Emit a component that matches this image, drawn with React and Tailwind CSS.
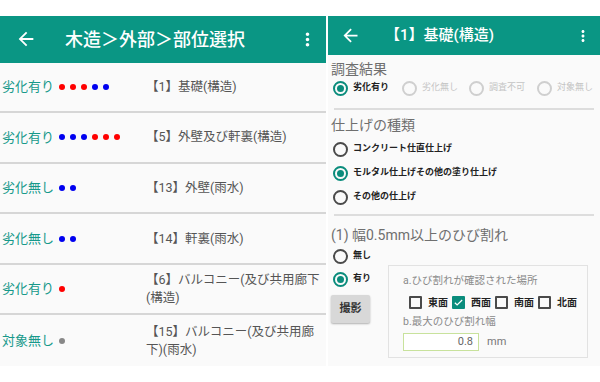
import React from "react";

const TEAL = "bg-[#0a9684]";

function ArrowBack({ size }) {
  return (
    <svg width={size} height={size} viewBox="0 0 24 24" fill="white" aria-hidden="true">
      <path d="M20 11H7.83l5.59-5.59L12 4l-8 8 8 8 1.41-1.41L7.83 13H20v-2z" />
    </svg>
  );
}

function MoreVert({ size }) {
  return (
    <svg width={size} height={size} viewBox="0 0 24 24" fill="white" aria-hidden="true">
      <path d="M12 8c1.1 0 2-.9 2-2s-.9-2-2-2-2 .9-2 2 .9 2 2 2zm0 2c-1.1 0-2 .9-2 2s.9 2 2 2 2-.9 2-2-.9-2-2-2zm0 6c-1.1 0-2 .9-2 2s.9 2 2 2 2-.9 2-2-.9-2-2-2z" />
    </svg>
  );
}

const DOT = {
  r: "bg-[#ff0000]",
  b: "bg-[#0000f0]",
  g: "bg-[#888888]",
};

const PARTS = [
  { status: "劣化有り", dots: "rrrbb", title: "【1】基礎(構造)" },
  { status: "劣化有り", dots: "bbbrrr", title: "【5】外壁及び軒裏(構造)" },
  { status: "劣化無し", dots: "bb", title: "【13】外壁(雨水)" },
  { status: "劣化無し", dots: "bb", title: "【14】軒裏(雨水)" },
  { status: "劣化有り", dots: "r", title: "【6】バルコニー(及び共用廊下(構造)" },
  { status: "対象無し", dots: "g", title: "【15】バルコニー(及び共用廊下)(雨水)" },
];

function PartRow({ part, last }) {
  return (
    <div
      className={`flex items-center h-[51px] ${last ? "" : "border-b-2 border-[#d6d6d6]"}`}
    >
      <div className="w-[146px] shrink-0 flex items-center pl-[2px]">
        <span className="text-[13px] text-[#17998a] w-[52px]">{part.status}</span>
        <span className="ml-[5px] flex gap-[5px]">
          {part.dots.split("").map((d, i) => (
            <span key={i} className={`block w-[6px] h-[6px] rounded-full ${DOT[d]}`} />
          ))}
        </span>
      </div>
      <div className="w-[180px] text-[12.5px] leading-[18px] text-[#555555]">{part.title}</div>
    </div>
  );
}

function Radio({ checked, disabled }) {
  const border = checked
    ? "border-[#0a8c7c]"
    : disabled
    ? "border-[#cfcfcf]"
    : "border-[#4a4a4a]";
  return (
    <span
      className={`flex items-center justify-center w-[15px] h-[15px] rounded-full border-2 shrink-0 ${border}`}
    >
      {checked && <span className="block w-[7px] h-[7px] rounded-full bg-[#0a8c7c]" />}
    </span>
  );
}

function RadioItem({ label, checked, disabled, className = "" }) {
  return (
    <div className={`flex items-center gap-[5px] ${className}`}>
      <Radio checked={checked} disabled={disabled} />
      <span
        className={`text-[9px] font-bold ${disabled ? "text-[#c4c4c4] font-normal" : "text-[#222222]"}`}
      >
        {label}
      </span>
    </div>
  );
}

function Check({ label, checked }) {
  return (
    <div className="w-[43px] flex items-center gap-[6px] shrink-0">
      {checked ? (
        <span className="flex items-center justify-center w-[13px] h-[13px] bg-[#0a8c7c] rounded-[1px]">
          <svg width="11" height="11" viewBox="0 0 24 24" fill="none" aria-hidden="true">
            <path d="M4 12.5l5 5L20 6.5" stroke="white" strokeWidth="2.6" />
          </svg>
        </span>
      ) : (
        <span className="block w-[13px] h-[13px] border-2 border-[#4a4a4a] rounded-[1px]" />
      )}
      <span className="text-[10px] font-bold text-[#222222]">{label}</span>
    </div>
  );
}

export default function App() {
  return (
    <div className="w-[600px] h-[382px] bg-white pt-[16px] flex font-['Roboto','Noto_Sans_CJK_JP',sans-serif] overflow-hidden">
      {/* left: part list */}
      <div className="w-[326px] h-[350px] bg-[#fafafa] flex flex-col shrink-0">
        <div className={`h-[47px] ${TEAL} flex items-center pl-[15px] pr-[8px]`}>
          <ArrowBack size={22} />
          <span className="ml-[28px] text-[18px] font-medium text-white">木造＞外部＞部位選択</span>
          <span className="ml-auto">
            <MoreVert size={21} />
          </span>
        </div>
        {PARTS.map((p, i) => (
          <PartRow key={i} part={p} last={i === PARTS.length - 1} />
        ))}
      </div>

      {/* right: detail */}
      <div className="ml-[2px] w-[272px] h-[350px] bg-[#fafafa] flex flex-col shrink-0">
        <div className={`h-[39px] ${TEAL} flex items-center pl-[12px] pr-[8px]`}>
          <ArrowBack size={21} />
          <span className="ml-[24px] text-[15px] font-medium text-white">【1】基礎(構造)</span>
          <span className="ml-auto">
            <MoreVert size={18} />
          </span>
        </div>

        <div className="pl-[3px] flex flex-col">
          <div className="mt-[4px] text-[14px] leading-[20px] text-[#6f6f6f]">調査結果</div>
          <div className="h-[18px] flex items-center pl-[2px]">
            <RadioItem label="劣化有り" checked className="w-[69px]" />
            <RadioItem label="劣化無し" disabled className="w-[67px]" />
            <RadioItem label="調査不可" disabled className="w-[68px]" />
            <RadioItem label="対象無し" disabled />
          </div>
          <div className="mt-[11px] ml-[3px] w-[260px] h-[2px] bg-[#dddddd]" />

          <div className="mt-[5px] text-[14px] leading-[20px] text-[#6f6f6f]">仕上げの種類</div>
          <div className="mt-[2px] pl-[2px] flex flex-col">
            <RadioItem label="コンクリート仕直仕上げ" className="h-[24px]" />
            <RadioItem label="モルタル仕上げその他の塗り仕上げ" checked className="h-[24px]" />
            <RadioItem label="その他の仕上げ" className="h-[24px]" />
          </div>
          <div className="mt-[5px] ml-[3px] w-[260px] h-[2px] bg-[#dddddd]" />

          <div className="mt-[9px] text-[14px] leading-[20px] text-[#6f6f6f]">(1) 幅0.5mm以上のひび割れ</div>

          <div className="flex">
            <div className="w-[57px] shrink-0 flex flex-col">
              <RadioItem label="無し" className="h-[22px] pl-[2px]" />
              <RadioItem label="有り" checked className="h-[24px] pl-[2px]" />
              <button
                type="button"
                className="mt-[4px] w-[39px] h-[28px] bg-[#d8d8d8] rounded-[2px] shadow-[0_1px_2px_rgba(0,0,0,0.3)] text-[11px] font-bold text-[#333333]"
              >
                撮影
              </button>
            </div>

            <div className="mt-[20px] w-[200px] h-[93px] border border-[#e2e2e2] bg-[#fafafa] pl-[14px] pt-[8px] flex flex-col">
              <div className="text-[10.5px] leading-[14px] text-[#8a8a8a]">a.ひび割れが確認された場所</div>
              <div className="mt-[6px] h-[16px] flex items-center pl-[6px]">
                <Check label="東面" />
                <Check label="西面" checked />
                <Check label="南面" />
                <Check label="北面" />
              </div>
              <div className="mt-[5px] text-[10.5px] leading-[14px] text-[#8a8a8a]">b.最大のひび割れ幅</div>
              <div className="mt-[4px] flex items-center">
                <div className="w-[76px] h-[18px] border border-[#c8e29c] bg-white flex items-center justify-end pr-[5px] text-[11px] text-[#666666]">
                  0.8
                </div>
                <span className="ml-[8px] text-[11px] text-[#777777]">mm</span>
              </div>
            </div>
          </div>
        </div>
      </div>
    </div>
  );
}
